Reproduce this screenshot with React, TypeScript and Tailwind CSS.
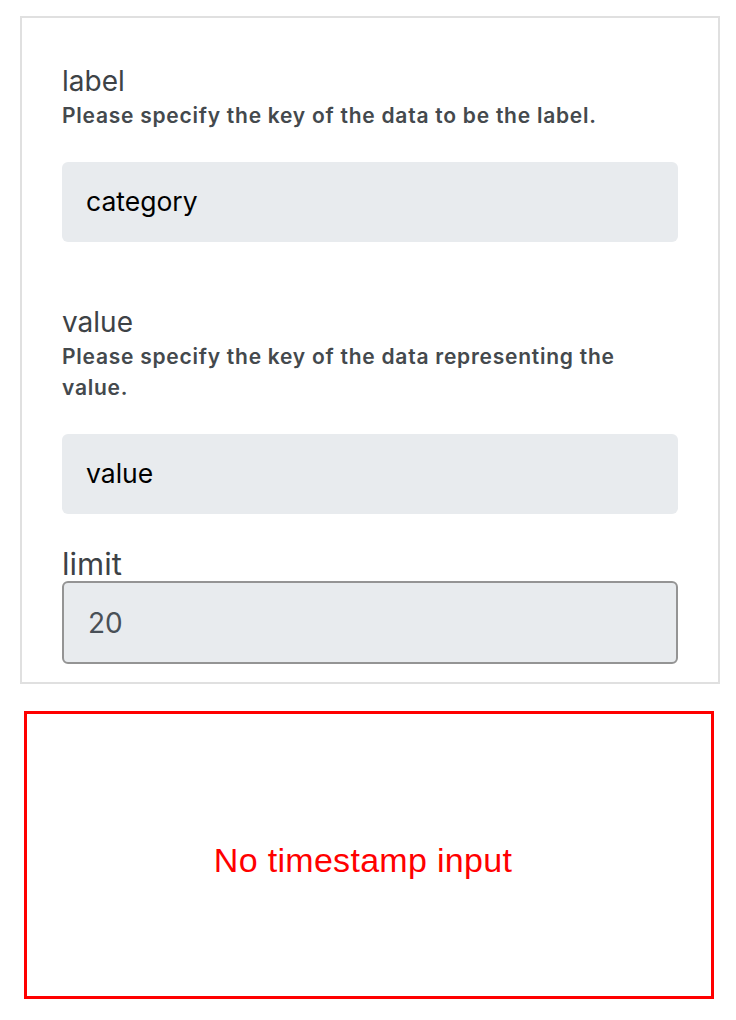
import React from 'react'

const sans = "font-['Inter','Noto_Sans',sans-serif]"

function Field({ title, hint, value }: { title: string; hint: string; value: string }) {
  return (
    <div className="flex flex-col">
      <div className="text-[28px] leading-[29px] text-[#3d4246]">{title}</div>
      <div className="mt-[4px] max-w-[580px] text-[21px] font-semibold leading-[31px] tracking-[0.75px] text-[#44494d]">
        {hint}
      </div>
      <div className="mt-[31px] flex h-[80px] items-center rounded-[6px] bg-[#e8ebee] px-[24px] text-[26.5px] text-black">
        {value}
      </div>
    </div>
  )
}

export default function App() {
  return (
    <div className={`w-[736px] bg-white pb-[22px] pt-[16px] ${sans}`}>
      {/* settings panel */}
      <div className="ml-[20px] w-[700px] border-2 border-[#e0e0e0] px-[40px] pb-[18px] pt-[49px]">
        <div className="flex flex-col gap-[66px]">
          <Field title="label" hint="Please specify the key of the data to be the label." value="category" />
          <Field title="value" hint="Please specify the key of the data representing the value." value="value" />
        </div>

        <div className="mt-[33px] text-[31px] leading-[34px] text-[#3d4246]">limit</div>
        <div className="flex h-[83px] items-center rounded-[6px] border-2 border-[#949494] bg-[#e8ebee] px-[24px] text-[28px] text-[#495057]">
          20
        </div>
      </div>

      {/* error box */}
      <div className="ml-[24px] mt-[27px] flex h-[288px] w-[690px] items-center justify-center border-[3px] border-[#ff0000] pr-[12px] pt-[10px]">
        <span className="font-['Liberation_Sans',Arial,sans-serif] text-[34px] tracking-[0.3px] text-[#ff0000]">No timestamp input</span>
      </div>
    </div>
  )
}
